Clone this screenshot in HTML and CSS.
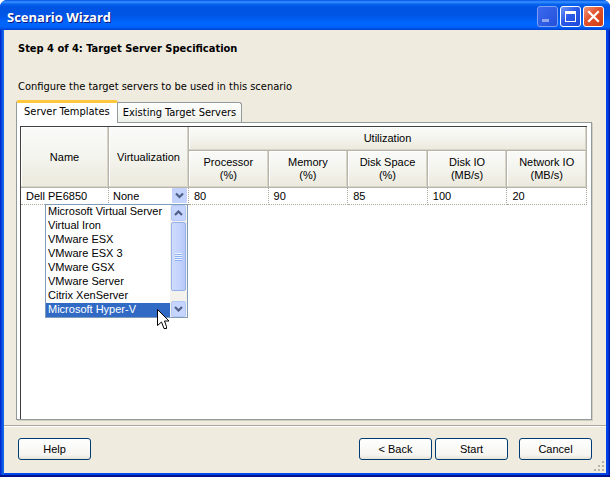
FILE: index.html
```html
<!DOCTYPE html>
<html lang="en">
<head>
    <meta charset="UTF-8">
    <meta name="viewport" content="width=device-width, initial-scale=1.0">
    <title>Scenario Wizard</title>
    <link rel="stylesheet" href="styles.css">
</head>
<body>
    <div class="window">
        <header class="titlebar">
            <h1>Scenario Wizard</h1>
            <div class="window-buttons">
                <button type="button" class="minimize" aria-label="Minimize" disabled>
                    <svg width="19" height="19" viewBox="0 0 19 19"><path d="M4 12h7v3H4z" fill="#8fa5f0"/></svg>
                </button>
                <button type="button" class="maximize" aria-label="Maximize">
                    <svg width="19" height="19" viewBox="0 0 19 19"><path d="M4 4h11v11H4zM5 7v7h9V7z" fill="#fff" fill-rule="evenodd"/></svg>
                </button>
                <button type="button" class="close" aria-label="Close">
                    <svg width="19" height="19" viewBox="0 0 19 19"><path d="M5 5l9 9M14 5l-9 9" stroke="#fff" stroke-width="2.2" stroke-linecap="square"/></svg>
                </button>
            </div>
        </header>

        <main class="content">
            <h2>Step 4 of 4: Target Server Specification</h2>
            <p class="intro">Configure the target servers to be used in this scenario</p>

            <div class="tabs" role="tablist">
                <button type="button" class="tab active" role="tab" aria-selected="true">Server Templates</button>
                <button type="button" class="tab" role="tab" aria-selected="false">Existing Target Servers</button>
            </div>
            <div class="panel" role="tabpanel">
                <div class="grid">
                    <table>
                        <colgroup>
                            <col class="col-name">
                            <col class="col-virt">
                            <col span="5">
                        </colgroup>
                        <thead>
                            <tr class="group-row">
                                <th rowspan="2">Name</th>
                                <th rowspan="2">Virtualization</th>
                                <th colspan="5">Utilization</th>
                            </tr>
                            <tr class="unit-row">
                                <th>Processor<br>(%)</th>
                                <th>Memory<br>(%)</th>
                                <th>Disk Space<br>(%)</th>
                                <th>Disk IO<br>(MB/s)</th>
                                <th>Network IO<br>(MB/s)</th>
                            </tr>
                        </thead>
                        <tbody>
                            <tr>
                                <td>Dell PE6850</td>
                                <td class="combo-cell">
                                    <div class="combo">
                                        <select class="combo-value" aria-label="Virtualization">
                                            <option>None</option>
                                        </select>
                                        <svg class="combo-arrow" width="15" height="15" viewBox="0 0 15 15"><rect width="15" height="15" rx="1" fill="#c3d3fd"/><path d="M4 5.5L7.5 9 11 5.5" fill="none" stroke="#4d6185" stroke-width="2.2"/></svg>
                                    </div>
                                    <div class="popup">
                                        <select class="options" size="8" aria-label="Virtualization options">
                                            <option>Microsoft Virtual Server</option>
                                            <option>Virtual Iron</option>
                                            <option>VMware ESX</option>
                                            <option>VMware ESX 3</option>
                                            <option>VMware GSX</option>
                                            <option>VMware Server</option>
                                            <option>Citrix XenServer</option>
                                            <option selected>Microsoft Hyper-V</option>
                                        </select>
                                        <div class="scrollbar">
                                            <button type="button" aria-label="Scroll up"><svg width="9" height="6" viewBox="0 0 9 6"><path d="M1 5l3.5-3.5L8 5" fill="none" stroke="#4d6185" stroke-width="2.2"/></svg></button>
                                            <div class="thumb"><i></i></div>
                                            <button type="button" aria-label="Scroll down"><svg width="9" height="6" viewBox="0 0 9 6"><path d="M1 1l3.5 3.5L8 1" fill="none" stroke="#4d6185" stroke-width="2.2"/></svg></button>
                                        </div>
                                        <svg class="pointer" width="13" height="21" viewBox="0 0 13 21"><path d="M.5.5v16l4-3.5L7 19.500h2.500v-2L7.500 12h4.500z" fill="#fff" stroke="#000"/></svg>
                                    </div>
                                </td>
                                <td>80</td>
                                <td>90</td>
                                <td>85</td>
                                <td>100</td>
                                <td>20</td>
                            </tr>
                        </tbody>
                    </table>
                </div>
            </div>
        </main>

        <footer class="actions">
            <button type="button" class="btn help">Help</button>
            <button type="button" class="btn">&lt; Back</button>
            <button type="button" class="btn">Start</button>
            <button type="button" class="btn cancel">Cancel</button>
            <svg class="grip" width="12" height="12" viewBox="0 0 12 12"><path d="M8 0h2v2H8zM4 4h2v2H4zM8 4h2v2H8zM0 8h2v2H0zM4 8h2v2H4zM8 8h2v2H8z" fill="#b8b4a3"/></svg>
        </footer>
    </div>
</body>
</html>
```
FILE: styles.css
```css
* {
    box-sizing: border-box;
}
body {
    margin: 0;
    background: #fff;
    color: #000;
    font-family: "Liberation Sans", Arial, sans-serif;
    font-size: 11px;
}
button,
select {
    font: inherit;
    color: inherit;
    margin: 0;
}
.window {
    display: flex;
    flex-direction: column;
    min-height: 100vh;
    padding: 0 4px 4px;
    border-radius: 7px 7px 0 0;
    background: linear-gradient(to right, #0019cf, #0855dd 2px, #166aee 4px, #0046e8 4px, #0046e8 calc(100% - 4px), #003dea calc(100% - 2px), #00138c 100%);
    box-shadow: inset 0 -2px #00138c;
}

/* title bar */
.titlebar {
    display: flex;
    align-items: center;
    justify-content: space-between;
    height: 30px;
    margin: 0 -4px;
    padding: 3px 4px 0 7px;
    border-radius: 7px 7px 0 0;
    background: linear-gradient(to bottom, #0054e8 0, #3a92ff 2px, #0866f0 4px, #0054e3 7px, #0055e5 15px, #0066ff 23px, #0063fb 27px, #0040d0 30px);
}
.titlebar h1 {
    margin: 0;
    color: #fff;
    font-family: "Open Sans", sans-serif;
    font-size: 13px;
    font-weight: bold;
    text-shadow: 1px 1px #0a1883;
}
.window-buttons {
    display: flex;
    gap: 2px;
    padding-right: 2px;
}
.window-buttons button {
    width: 21px;
    height: 21px;
    padding: 0;
    border: 1px solid #fff;
    border-radius: 3px;
    background: linear-gradient(135deg, #6e95f7, #2c5ae8 45%, #1c49d8);
}
.window-buttons svg {
    display: block;
}
.window-buttons .minimize {
    border-color: #7f9ff2;
    background: linear-gradient(135deg, #3a6af0, #2450d8);
}
.window-buttons .close {
    background: linear-gradient(135deg, #f0967c, #e0502c 45%, #cf3c10);
}

/* wizard page */
.content {
    display: flex;
    flex: 1;
    flex-direction: column;
    padding: 10px 14px 5px 12px;
    background: #efebde;
}
.content h2 {
    margin: 0 2px 20px;
    font-family: "DejaVu Sans Condensed", Tahoma, sans-serif;
    font-size: 11px;
    line-height: 18px;
}
.intro {
    margin: 0 2px 4px;
    font-family: "DejaVu Sans Condensed", Tahoma, sans-serif;
    font-size: 11px;
    line-height: 18px;
}
.tabs {
    display: flex;
    align-items: flex-end;
    height: 22px;
}
.tab {
    height: 20px;
    padding: 0 5px;
    border: 1px solid #919b9c;
    border-left: 0;
    border-bottom: 0;
    border-radius: 0 3px 0 0;
    background: linear-gradient(#fff, #f0f0ea);
    font-family: "DejaVu Sans Condensed", Tahoma, sans-serif;
    font-size: 11px;
    white-space: nowrap;
}
.tab.active {
    z-index: 1;
    height: 23px;
    margin-bottom: -1px;
    padding: 0 7px 4px;
    border-left: 1px solid #919b9c;
    border-top: 3px solid #ffc73c;
    border-radius: 3px 3px 0 0;
    background: #fff;
}
.panel {
    display: flex;
    flex: 1;
    padding: 3px 4px 0 3px;
    border: 1px solid #919b9c;
    background: #fff;
    box-shadow: 1px 1px #d0cebf;
}
.grid {
    flex: 1;
    border-top: 1px solid #404040;
    border-left: 1px solid #404040;
}

/* server table */
table {
    width: 100%;
    border-collapse: separate;
    border-spacing: 0;
    table-layout: fixed;
}
.col-name {
    width: 88px;
}
.col-virt {
    width: 80px;
}
th {
    padding: 0;
    border-right: 1px solid #b5b5ac;
    border-bottom: 1px solid #b5b5ac;
    background: linear-gradient(#fafbf9, #f4f4ee 50%, #ebe9dc);
    box-shadow: inset -1px -1px #d8d5c6, inset 1px 1px #fff;
    font-weight: normal;
    line-height: 13px;
}
.group-row {
    height: 24px;
}
.unit-row {
    height: 37px;
}
td {
    height: 17px;
    padding: 0 5px;
    border-right: 1px dotted #aca899;
    border-bottom: 1px dotted #aca899;
    line-height: 16px;
    white-space: nowrap;
}
.combo-cell {
    position: relative;
    padding: 0;
}
.combo {
    display: grid;
    grid-template-columns: 1fr 15px;
    padding-right: 1px;
}
.combo-value {
    grid-area: 1 / 1 / 2 / 3;
    height: 16px;
    padding: 0 16px 0 4px;
    border: 0;
    appearance: none;
    background: transparent;
}
.combo-arrow {
    grid-area: 1 / 2;
    pointer-events: none;
}

/* open drop-down list */
.popup {
    position: absolute;
    top: 16px;
    right: 0;
    display: flex;
    width: 143px;
    border: 1px solid #7f9db9;
    background: #fff;
}
.options {
    flex: 1;
    min-width: 0;
    height: 112px;
    padding: 0;
    border: 0;
    border-radius: 0;
    background: #fff;
    overflow: hidden;
    outline: 0;
}
.options option {
    min-height: 14px;
    height: 14px;
    padding: 0 2px;
    line-height: 14px;
}
.options option:checked {
    background: #316ac5 linear-gradient(#316ac5, #316ac5);
    color: #fff;
}
.scrollbar {
    display: flex;
    flex-direction: column;
    width: 17px;
    padding: 0 1px;
    background: #f3f2ec;
}
.scrollbar button {
    display: grid;
    place-items: center;
    height: 16px;
    padding: 0;
    border: 1px solid #b4c8f6;
    border-radius: 2px;
    background: #c6d5fd;
}
.thumb {
    display: grid;
    place-items: center;
    flex: 1;
    margin: 1px 0 10px;
    border: 1px solid #98b0e8;
    border-radius: 2px;
    background: linear-gradient(to right, #d0dcfe, #c2d2fc 60%, #b6c8f8);
}
.thumb i {
    width: 7px;
    height: 8px;
    background: repeating-linear-gradient(#eef4fe 0, #eef4fe 1px, #8cb0f8 1px, #8cb0f8 2px);
}
.pointer {
    position: absolute;
    top: 104px;
    left: 111px;
}

/* bottom buttons */
.actions {
    position: relative;
    display: flex;
    gap: 3px;
    padding: 12px 14px 13px;
    border-top: 1px solid #aca899;
    box-shadow: inset 0 1px #fff;
    background: #efebde;
}
.btn {
    width: 73px;
    height: 22px;
    padding: 0;
    border: 1px solid #003c74;
    border-radius: 3px;
    background: linear-gradient(#fff, #f6f5f1 80%, #e4e1d6);
}
.help {
    margin-right: auto;
}
.cancel {
    margin-left: 8px;
}
.grip {
    position: absolute;
    right: 0;
    bottom: 0;
}
```
